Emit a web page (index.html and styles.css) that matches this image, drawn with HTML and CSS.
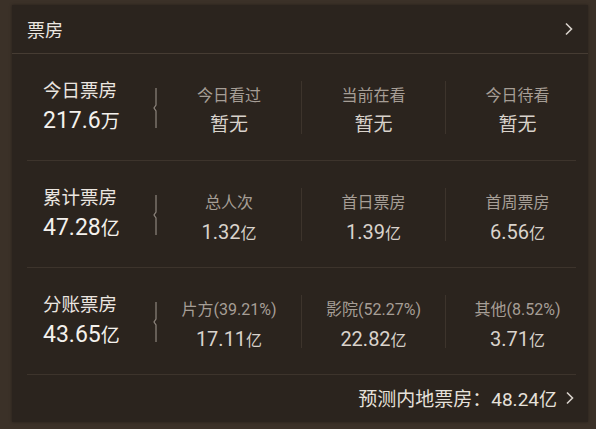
FILE: index.html
```html
<!DOCTYPE html>
<html lang="zh-CN">
<head>
  <meta charset="UTF-8" />
  <meta name="viewport" content="width=device-width, initial-scale=1.0"/>
  <title>票房</title>
  <link rel="stylesheet" href="styles.css">
</head>
<body>
  <div class="card">
    <div class="card-head">
      <span>票房</span>
      <svg class="chev" width="9" height="14" viewBox="0 0 9 14"><path d="M2 1.5 L7.5 7 L2 12.5" fill="none" stroke="#d8d2cb" stroke-width="1.6"/></svg>
    </div>

    <div class="row">
      <div class="main">
        <div class="main-text">
          <div class="main-label">今日票房</div>
          <div class="main-value">217.6<small>万</small></div>
        </div>
        <svg class="brace" width="7" height="40" viewBox="0 0 7 40"><path d="M5 0 V17 L3 20 L5 23 V40" fill="none" stroke="#8d857d" stroke-width="1.2"/></svg>
      </div>
      <div class="sub">
        <div class="sub-label">今日看过</div>
        <div class="sub-value cn">暂无</div>
      </div>
      <div class="sub sep">
        <div class="sub-label">当前在看</div>
        <div class="sub-value cn">暂无</div>
      </div>
      <div class="sub sep">
        <div class="sub-label">今日待看</div>
        <div class="sub-value cn">暂无</div>
      </div>
    </div>

    <div class="row">
      <div class="main">
        <div class="main-text">
          <div class="main-label">累计票房</div>
          <div class="main-value">47.28<small>亿</small></div>
        </div>
        <svg class="brace" width="7" height="40" viewBox="0 0 7 40"><path d="M5 0 V17 L3 20 L5 23 V40" fill="none" stroke="#8d857d" stroke-width="1.2"/></svg>
      </div>
      <div class="sub">
        <div class="sub-label">总人次</div>
        <div class="sub-value">1.32<small>亿</small></div>
      </div>
      <div class="sub sep">
        <div class="sub-label">首日票房</div>
        <div class="sub-value">1.39<small>亿</small></div>
      </div>
      <div class="sub sep">
        <div class="sub-label">首周票房</div>
        <div class="sub-value">6.56<small>亿</small></div>
      </div>
    </div>

    <div class="row">
      <div class="main">
        <div class="main-text">
          <div class="main-label">分账票房</div>
          <div class="main-value">43.65<small>亿</small></div>
        </div>
        <svg class="brace" width="7" height="40" viewBox="0 0 7 40"><path d="M5 0 V17 L3 20 L5 23 V40" fill="none" stroke="#8d857d" stroke-width="1.2"/></svg>
      </div>
      <div class="sub">
        <div class="sub-label">片方(39.21%)</div>
        <div class="sub-value">17.11<small>亿</small></div>
      </div>
      <div class="sub sep">
        <div class="sub-label">影院(52.27%)</div>
        <div class="sub-value">22.82<small>亿</small></div>
      </div>
      <div class="sub sep">
        <div class="sub-label">其他(8.52%)</div>
        <div class="sub-value">3.71<small>亿</small></div>
      </div>
    </div>

    <div class="card-foot">
      <span>预测内地票房：48.24<small>亿</small></span>
      <svg class="chev" width="9" height="14" viewBox="0 0 9 14"><path d="M2 1.5 L7.5 7 L2 12.5" fill="none" stroke="#d8d2cb" stroke-width="1.6"/></svg>
    </div>
  </div>
</body>
</html>
```

FILE: styles.css
```css
html, body {
  margin: 0;
  padding: 0;
}
body {
  background: #3b3128;
  font-family: Roboto, "Noto Sans CJK SC", sans-serif;
  width: 596px;
  height: 429px;
  overflow: hidden;
  padding-top: 5px;
  box-sizing: border-box;
}
.card {
  margin-left: 12px;
  width: 576px;
  height: 417px;
  background: #2b241e;
  box-shadow: 0 0 3px rgba(0, 0, 0, 0.35);
  display: flex;
  flex-direction: column;
}
.card-head {
  height: 48px;
  display: flex;
  align-items: center;
  justify-content: space-between;
  padding: 0 15px 0 15px;
  border-bottom: 1px solid #463c33;
  color: #ece7e1;
  font-size: 18px;
}
.chev {
  display: block;
}
.row {
  margin: 0 12px 0 15px;
  height: 106px;
  border-bottom: 1px solid #3d342c;
  display: grid;
  grid-template-columns: 130px 144px 144px 144px;
  align-items: center;
}
.main {
  display: flex;
  align-items: center;
  justify-content: space-between;
  padding-left: 16px;
  padding-top: 1px;
}
.main-label {
  font-size: 18.5px;
  line-height: 24px;
  color: #ebe6e0;
}
.main-value {
  font-size: 23px;
  line-height: 30px;
  margin-top: 3px;
  color: #f4f1ed;
}
.main-value small {
  font-size: 19px;
}
.brace {
  display: block;
  margin-right: -1px;
}
.sub {
  text-align: center;
  height: 53px;
  padding-top: 5px;
  box-sizing: border-box;
}
.sep {
  border-left: 1px solid #3d342c;
}
.sub-label {
  font-size: 16px;
  line-height: 20px;
  color: #a69e96;
}
.sub-value {
  font-size: 20px;
  line-height: 28px;
  margin-top: 5px;
  color: #d9d3cc;
}
.sub-value.cn {
  font-size: 19px;
}
.sub-value small {
  font-size: 16px;
}
.card-foot {
  flex: 1;
  display: flex;
  align-items: center;
  justify-content: flex-end;
  gap: 8px;
  padding: 0 14px 2px 0;
  color: #e6e1db;
  font-size: 19px;
}
.card-foot small {
  font-size: 18px;
}
```
